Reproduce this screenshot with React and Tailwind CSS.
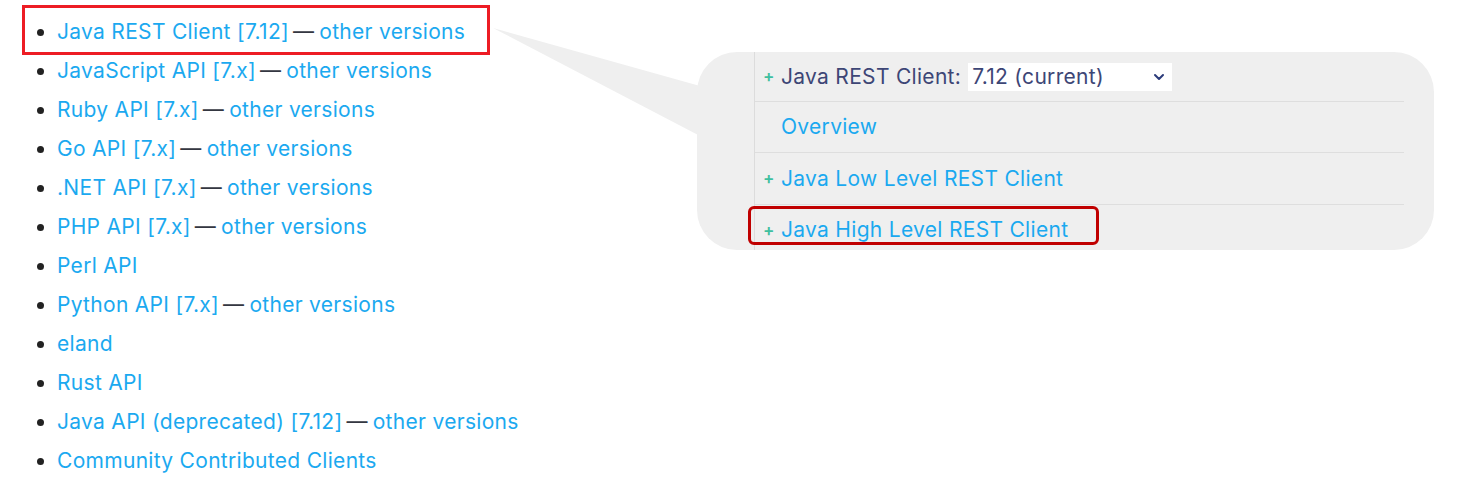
import React from 'react';
import { ChevronDown } from 'lucide-react';

const clients = [
    { name: 'Java REST Client [7.12]', other: true, boxed: true },
    { name: 'JavaScript API [7.x]', other: true },
    { name: 'Ruby API [7.x]', other: true },
    { name: 'Go API [7.x]', other: true },
    { name: '.NET API [7.x]', other: true },
    { name: 'PHP API [7.x]', other: true },
    { name: 'Perl API' },
    { name: 'Python API [7.x]', other: true },
    { name: 'eland' },
    { name: 'Rust API' },
    { name: 'Java API (deprecated) [7.12]', other: true },
    { name: 'Community Contributed Clients' },
];

const Plus = () => (
    <span className="w-[18px] text-[17px] font-semibold text-[#3fbf9f] leading-none">+</span>
);

const App = () => {
    return (
        <div className="relative w-[1460px] h-[490px] bg-white flex font-['Inter',sans-serif] tracking-[0.3px] overflow-hidden">
            {/* callout pointer */}
            <svg className="absolute left-0 top-0" width="1460" height="490">
                <polygon points="493,28 700,86 700,136" fill="#efefef" />
            </svg>

            <ul className="relative list-disc pl-[57px] pt-[12px] text-[21px] text-[#1ba9f0]">
                {clients.map((c) => (
                    <li key={c.name} className="relative h-[39px] leading-[39px] marker:text-[#222]">
                        {c.boxed && (
                            <span className="absolute left-[-35px] top-[-7px] w-[468px] h-[50px] border-[3px] border-[#ed1c24]" />
                        )}
                        <span>{c.name}</span>
                        {c.other && (
                            <>
                                <span className="ml-[4px] mr-[5px] text-[#343741]">—</span>
                                <span>other versions</span>
                            </>
                        )}
                    </li>
                ))}
            </ul>

            <div className="relative ml-auto mr-[26px] mt-[52px] w-[737px] h-[198px] rounded-[40px] bg-[#efefef] pl-[57px] text-[21px]">
                <div className="w-[650px] h-full border-l border-[#dcdcdc] flex flex-col">
                    <div className="h-[50px] flex items-center pl-[8px] border-b border-[#dedede]">
                        <Plus />
                        <span className="text-[#3d4676]">Java REST Client:</span>
                        <div className="ml-[7px] w-[204px] h-[28px] bg-white flex items-center justify-between pl-[4px] pr-[5px] text-[#3d4676]">
                            <span>7.12 (current)</span>
                            <ChevronDown size={16} strokeWidth={3} className="text-[#2b3b7a]" />
                        </div>
                    </div>
                    <div className="h-[51px] flex items-center pl-[26px] border-b border-[#dedede] text-[#1ba9f0]">
                        Overview
                    </div>
                    <div className="h-[52px] flex items-center pl-[8px] border-b border-[#dedede] text-[#1ba9f0]">
                        <Plus />
                        <span>Java Low Level REST Client</span>
                    </div>
                    <div className="relative flex-1 flex items-center pl-[8px] pt-[5px] text-[#1ba9f0]">
                        <span className="absolute left-[-7px] top-[1px] w-[351px] h-[39px] border-[3px] border-[#c00000] rounded-[6px]" />
                        <Plus />
                        <span>Java High Level REST Client</span>
                    </div>
                </div>
            </div>
        </div>
    );
};

export default App;
